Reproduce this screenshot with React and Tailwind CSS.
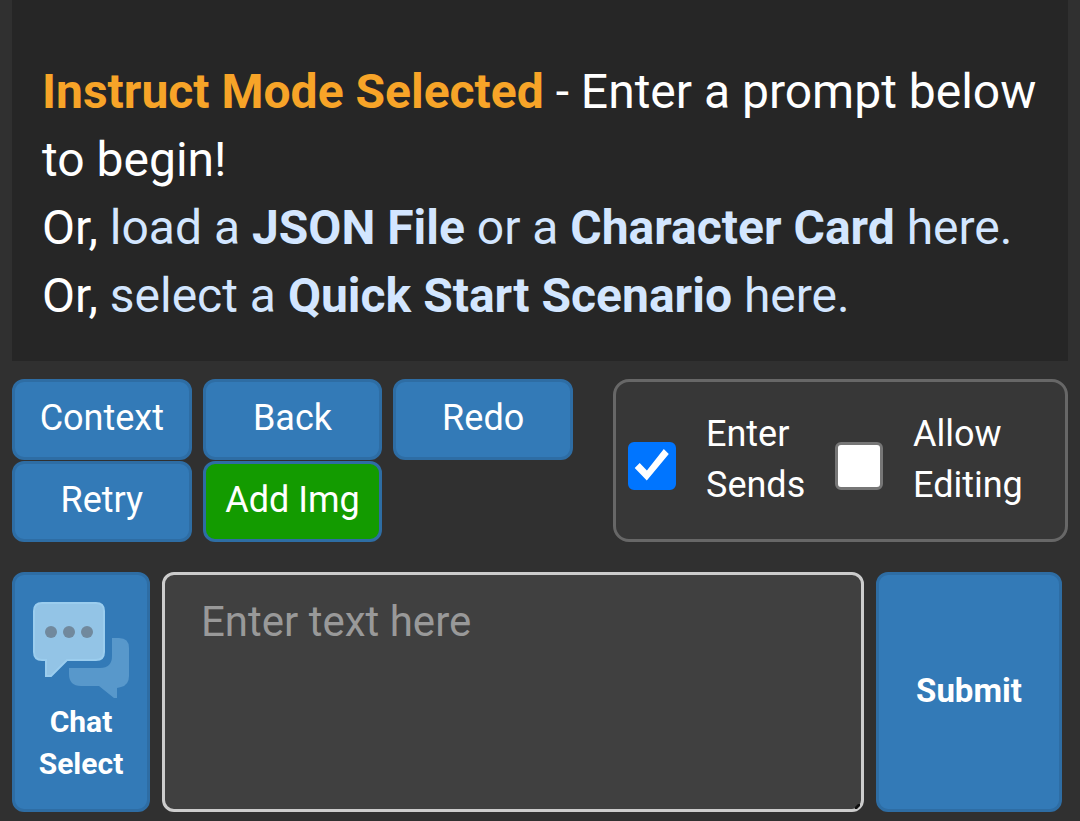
import React, { useState } from "react";

const actionClass =
  "h-[81px] rounded-xl border-[3px] border-[#2e6da4] pb-[3px] text-4xl text-white";

function ActionButton({ label, green }) {
  return (
    <button
      type="button"
      className={`${actionClass} ${green ? "bg-[#139b00]" : "bg-[#337ab7]"}`}
    >
      {label}
    </button>
  );
}

function Toggle({ id, label, checked, onChange }) {
  return (
    <div className="flex items-center gap-[30px]">
      <span className="mt-3 grid size-12 shrink-0">
        <input
          id={id}
          type="checkbox"
          checked={checked}
          onChange={(e) => onChange(e.target.checked)}
          className="peer col-start-1 row-start-1 size-12 appearance-none rounded-md border-[3px] border-[#767676] bg-white checked:border-[#0075ff] checked:bg-[#0075ff]"
        />
        <svg
          viewBox="0 0 48 48"
          className="pointer-events-none invisible col-start-1 row-start-1 size-12 peer-checked:visible"
          fill="#fff"
        >
          <path d="M6.7 26l5-5 7.2 7.4L35.8 7l5 5-22 26.4z" />
        </svg>
      </span>
      <label htmlFor={id} className="w-[116px] text-4xl leading-[51px]">
        {label}
      </label>
    </div>
  );
}

function ChatIcon() {
  return (
    <svg viewBox="0 0 96 96" className="size-24" aria-hidden="true">
      {/* back bubble */}
      <path
        fill="#5898cb"
        d="M79 36h7q10 0 10 10v28q0 9-8 11l-4 1v10h-3L66 84H48q-12 0-12-12v-6h31q12 0 12-12z"
      />
      {/* front bubble */}
      <path
        fill="#93c4e6"
        stroke="#9bcdee"
        strokeWidth="2"
        d="M9 1h54q8 0 8 8v41q0 8-8 8H34L18 74h-5V58H9q-8 0-8-8V9q0-8 8-8z"
      />
      <g fill="#71899d">
        <circle cx="18" cy="30" r="6" />
        <circle cx="36" cy="30" r="6" />
        <circle cx="54" cy="30" r="6" />
      </g>
    </svg>
  );
}

export default function App() {
  const [enterSends, setEnterSends] = useState(true);
  const [allowEdit, setAllowEdit] = useState(false);
  const [text, setText] = useState("");

  return (
    <div className="min-h-screen bg-[#303030] px-3 pb-2 font-[Roboto,sans-serif] text-white">
      <main className="bg-[#262626] px-[30px] pt-[58px] pb-[31px] text-5xl leading-[68px]">
        <p>
          <b className="text-[#f7a428]">Instruct Mode Selected</b> - Enter a
          prompt below to begin!
        </p>
        <p>
          Or,{" "}
          <a href="#load" className="text-[#d3e6ff]">
            load a <b>JSON File</b> or a <b>Character Card</b> here.
          </a>
        </p>
        <p>
          Or,{" "}
          <a href="#scenario" className="text-[#d3e6ff]">
            select a <b>Quick Start Scenario</b> here.
          </a>
        </p>
      </main>

      <div className="flex items-start justify-between gap-10 pt-[18px]">
        <div className="grid flex-1 grid-cols-3 gap-x-[11px] gap-y-px">
          <ActionButton label="Context" />
          <ActionButton label="Back" />
          <ActionButton label="Redo" />
          <ActionButton label="Retry" />
          <ActionButton label="Add Img" green />
        </div>

        <div className="flex min-h-[163px] shrink-0 items-center gap-[13px] rounded-2xl border-[3px] border-[#676767] bg-[#373737] pr-9 pb-[2px] pl-3">
          <Toggle
            id="enter-sends"
            label="Enter Sends"
            checked={enterSends}
            onChange={setEnterSends}
          />
          <Toggle
            id="allow-edit"
            label="Allow Editing"
            checked={allowEdit}
            onChange={setAllowEdit}
          />
        </div>
      </div>

      <form
        className="flex gap-3 pt-[30px] pr-[6px]"
        onSubmit={(e) => e.preventDefault()}
      >
        <button
          type="button"
          className="flex h-60 w-[138px] shrink-0 flex-col items-center rounded-xl border-[3px] border-[#2e6da4] bg-[#337ab7] pt-[27px] text-3xl leading-[42px] font-bold"
        >
          <ChatIcon />
          <span className="pt-[3px]">
            Chat
            <br />
            Select
          </span>
        </button>

        <div className="relative flex-1">
          <textarea
            aria-label="Prompt"
            placeholder="Enter text here"
            value={text}
            onChange={(e) => setText(e.target.value)}
            className="block h-60 w-full resize-none rounded-xl border-[3px] border-[#ccc] bg-[#404040] px-9 py-[17px] text-[42px] leading-[60px] text-white placeholder:text-[#999]"
          />
          {/* corner grip */}
          <svg
            viewBox="0 0 6 6"
            className="pointer-events-none absolute right-[3px] bottom-[3px] size-[6px]"
          >
            <path d="M0 4l3-3h2v2L2 6H0z" fill="#111" />
          </svg>
        </div>

        <button
          type="submit"
          className="h-60 w-[186px] shrink-0 rounded-xl border-[3px] border-[#2e6da4] bg-[#337ab7] pb-[3px] text-[33px] font-bold"
        >
          Submit
        </button>
      </form>
    </div>
  );
}
